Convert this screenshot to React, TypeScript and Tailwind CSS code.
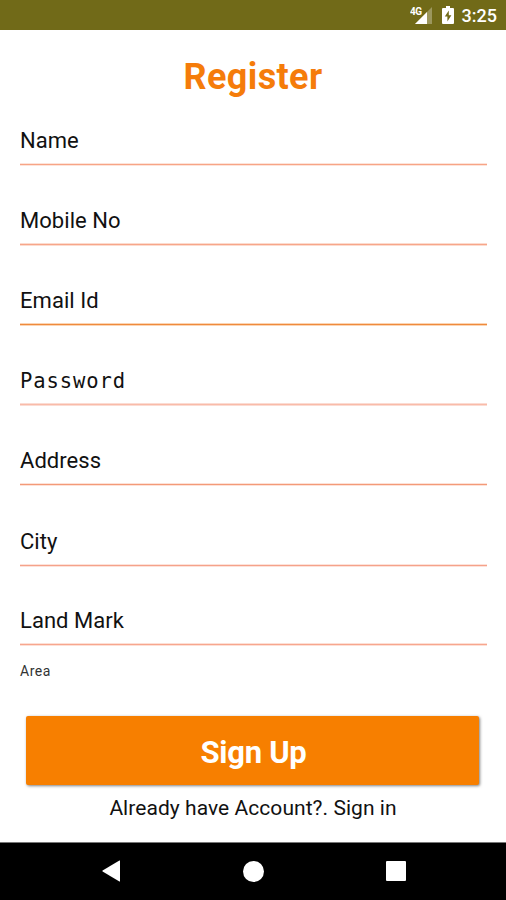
import clsx from "clsx";

const fields = [
  { label: "Name", line: "bg-[#f7a486] border-[#fde4da]", height: "h-[80px]" },
  { label: "Mobile No", line: "bg-[#f7a68a] border-[#fcdccf]", height: "h-[80px]" },
  { label: "Email Id", line: "bg-[#ef8a3c] border-[#fbd5b4]", height: "h-[80px]" },
  { label: "Password", line: "bg-[#f9bba9] border-[#fbdcd3]", height: "h-[80px]", mono: true },
  { label: "Address", line: "bg-[#f39a78] border-[#fde2d8]", height: "h-[80px]" },
  { label: "City", line: "bg-[#f5a28a] border-[#fde2da]", height: "h-[81px]" },
  { label: "Land Mark", line: "bg-[#f7a68e] border-[#fde0d6]", height: "h-[79px]" },
];

function StatusBar() {
  return (
    <header className="flex h-[30px] items-center justify-end bg-[#716a18] pr-[9px] text-white">
      <svg width="24" height="20" viewBox="0 0 24 20" className="mt-[2px]">
        <path d="M22 1v17H5z" fill="#fff" opacity="0.3" />
        <path d="M17 6v12H5z" fill="#fff" />
        <text x="0" y="8.5" fill="#fff" fontFamily="Roboto, sans-serif" fontSize="10" fontWeight="700" letterSpacing="-0.5">
          4G
        </text>
      </svg>
      <svg width="12" height="18" viewBox="0 0 12 18" className="ml-[8px]">
        <path d="M4 0h4v2h3q1 0 1 1v14q0 1-1 1H1q-1 0-1-1V3q0-1 1-1h3z" fill="#fff" />
        <path d="M6.8 4.5 2.8 10.5h2.6v5l4-6.2H6.8z" fill="#716a18" />
      </svg>
      <span className="ml-[8px] mt-[2px] text-[18px] font-medium leading-none">3:25</span>
    </header>
  );
}

function NavBar() {
  return (
    <nav className="flex h-[58px] items-center border-t border-[#777] bg-black pb-px pl-[102px]">
      <svg width="18" height="22" viewBox="0 0 18 22" fill="#fff">
        <path d="M18 .8v20.4q0 .6-.6.3L.6 11.6Q0 11 .6 10.4L17.4.5q.6-.3.6.3z" />
      </svg>
      <div className="ml-[123px] size-[21px] rounded-full bg-white" />
      <div className="ml-[122px] size-[20px] rounded-[1px] bg-white" />
    </nav>
  );
}

export default function App() {
  return (
    <div className="flex h-[900px] w-[506px] flex-col bg-white font-['Roboto',sans-serif] text-[#111]">
      <StatusBar />
      <main className="flex-1">
        <h1 className="h-[56px] pt-[28px] text-center text-[36px] font-bold leading-[38px] tracking-[0.4px] text-[#f57c0a]">
          Register
        </h1>
        <form>
          {fields.map((field) => (
            <div key={field.label} className={clsx("flex flex-col justify-end pl-[20px] pr-[19px]", field.height)}>
              <label
                className={clsx(
                  "mb-[8px] leading-[28px]",
                  field.mono
                    ? "font-['DejaVu_Sans_Mono',monospace] text-[20.5px] tracking-[0.9px]"
                    : "text-[22px] tracking-[0.05px]",
                )}
              >
                {field.label}
              </label>
              <div className={clsx("h-[3px] border-y", field.line)} />
            </div>
          ))}
          <p className="mt-[15px] pl-[20px] text-[14px] leading-[20px] tracking-[0.5px] text-[#333]">Area</p>
          <button
            type="button"
            className="ml-[26px] mt-[35px] block h-[69px] w-[453px] rounded-[2px] bg-[#f77f00] pl-[2px] pt-[5px] text-[31px] font-bold tracking-[-0.3px] text-white shadow-[1px_1px_3px_rgba(0,0,0,0.5)]"
          >
            Sign Up
          </button>
          <p className="mt-[9px] text-center text-[21px] leading-[28px] tracking-[0.05px]">Already have Account?. Sign in</p>
        </form>
      </main>
      <NavBar />
    </div>
  );
}
